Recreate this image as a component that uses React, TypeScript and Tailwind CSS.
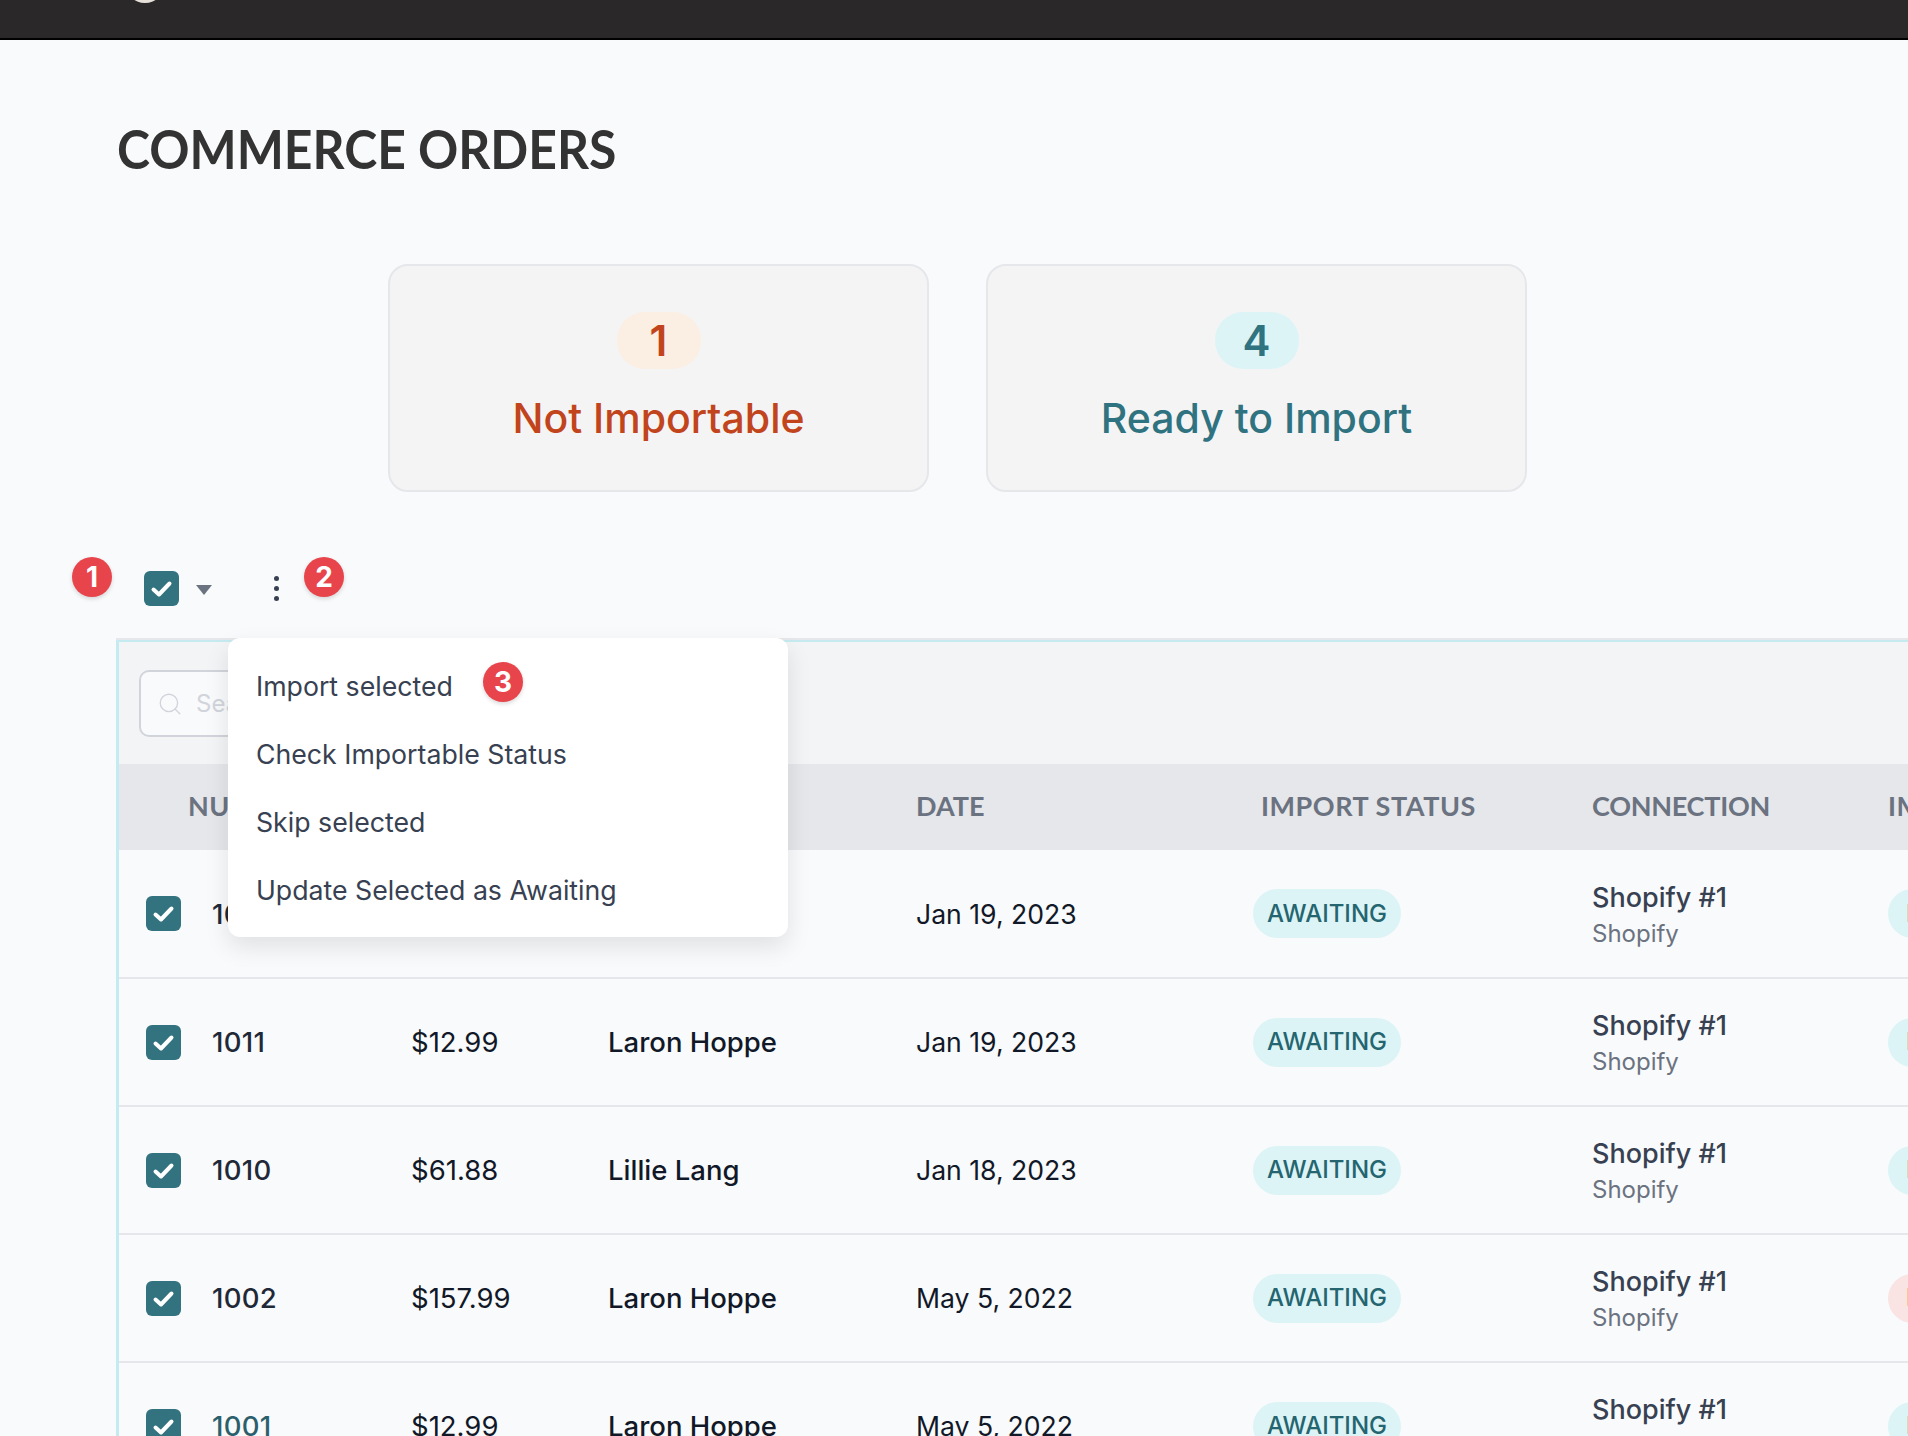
import { Search } from 'lucide-react';

const ORDERS = [
  { num: '1012', price: '$12.99', name: 'Laron Hoppe', date: 'Jan 19, 2023', importable: true },
  { num: '1011', price: '$12.99', name: 'Laron Hoppe', date: 'Jan 19, 2023', importable: true },
  { num: '1010', price: '$61.88', name: 'Lillie Lang', date: 'Jan 18, 2023', importable: true },
  { num: '1002', price: '$157.99', name: 'Laron Hoppe', date: 'May 5, 2022', importable: false },
  { num: '1001', price: '$12.99', name: 'Laron Hoppe', date: 'May 5, 2022', importable: true, link: true },
];

const MENU_ITEMS = ['Import selected', 'Check Importable Status', 'Skip selected', 'Update Selected as Awaiting'];

function Checkbox() {
  return (
    <span className="flex h-[35px] w-[35px] items-center justify-center rounded-[6px] bg-[#33727f]">
      <svg viewBox="0 0 35 35" className="h-[35px] w-[35px]" fill="none">
        <path d="M9.5 18.5 L15 23.5 L25.5 12.5" stroke="#fff" strokeWidth="4" strokeLinecap="round" strokeLinejoin="round" />
      </svg>
    </span>
  );
}

function Marker({ n, className }: { n: number; className: string }) {
  return (
    <span className={`absolute flex h-[40px] w-[40px] items-center justify-center rounded-full bg-[#e7454b] text-[28px] font-bold leading-none text-white shadow-[0_2px_4px_rgba(0,0,0,0.15)] ${className}`}>
      {n}
    </span>
  );
}

function StatCard({ count, label, pill, text }: { count: number; label: string; pill: string; text: string }) {
  return (
    <div className="flex h-[228px] w-[541px] flex-col items-center rounded-[20px] border-2 border-[#e5e7eb] bg-[#f4f4f5] pt-[46px]">
      <span className={`flex h-[57px] w-[84px] items-center justify-center rounded-[28px] text-[42px] font-semibold leading-none ${pill} ${text}`}>{count}</span>
      <span className={`mt-[24px] text-[41px] font-medium leading-[50px] ${text}`}>{label}</span>
    </div>
  );
}

export default function App() {
  return (
    <div className="relative h-[1436px] w-[1908px] overflow-hidden bg-[#f9fafc] font-['Inter',sans-serif]">
      <div className="relative h-[40px] border-b-2 border-black bg-[#2a2829]">
        <span className="absolute left-[125px] top-[-37px] h-[40px] w-[40px] rounded-full bg-[#e5e1d8]" />
      </div>

      <h1 className="ml-[117px] mt-[75px] origin-left scale-x-[0.924] font-['Lato',sans-serif] text-[54px] font-bold leading-[68px] text-[#333333]">COMMERCE ORDERS</h1>

      <div className="mt-[81px] flex gap-[57px] pl-[388px]">
        <StatCard count={1} label="Not Importable" pill="bg-[#fbeee2]" text="text-[#c2441c]" />
        <StatCard count={4} label="Ready to Import" pill="bg-[#dcf4f6]" text="text-[#2f7280]" />
      </div>

      <div className="relative mt-[79px] flex h-[69px] items-start pl-[144px]">
        <Checkbox />
        <svg viewBox="0 0 16 10" className="ml-[17px] mt-[14px] h-[10px] w-[16px]">
          <path d="M0 0 H16 L8 10 Z" fill="#6b7280" />
        </svg>
        <span className="ml-[62px] mt-[5px] flex flex-col gap-[5px]">
          <span className="h-[5px] w-[5px] rounded-full bg-[#374151]" />
          <span className="h-[5px] w-[5px] rounded-full bg-[#374151]" />
          <span className="h-[5px] w-[5px] rounded-full bg-[#374151]" />
        </span>
        <Marker n={1} className="left-[72px] top-[-14px]" />
        <Marker n={2} className="left-[304px] top-[-14px]" />
      </div>

      <div className="relative ml-[116px] w-[1900px] border-l-[3px] border-t-2 border-l-[#c5eaf0] border-t-[#c5eaf0] shadow-[0_-2px_0_#e5e7eb]">
        <div className="flex h-[122px] items-start bg-[#f3f4f6] pl-[20px] pt-[28px]">
          <div className="flex h-[67px] w-[300px] items-center gap-[13px] rounded-[10px] border-2 border-[#d1d5db] bg-[#f9fafc] pl-[16px]">
            <Search className="h-[26px] w-[26px] text-[#d1d5db]" strokeWidth={1.25} />
            <span className="text-[24px] text-[#d1d5db]">Search</span>
          </div>
        </div>

        <table className="w-[1900px] table-fixed border-collapse">
          <colgroup>
            <col className="w-[93px]" />
            <col className="w-[199px]" />
            <col className="w-[197px]" />
            <col className="w-[308px]" />
            <col className="w-[337px]" />
            <col className="w-[339px]" />
            <col className="w-[296px]" />
            <col />
          </colgroup>
          <thead>
            <tr className="h-[86px] bg-[#e5e7eb] text-left font-['Lato',sans-serif] text-[27px] font-bold tracking-[0.02em] text-[#6b7280]">
              <th />
              <th className="pb-[2px] font-bold"><span className="-ml-[24px]">NUMBER</span></th>
              <th className="pb-[2px] font-bold">TOTAL</th>
              <th className="pb-[2px] font-bold">CUSTOMER</th>
              <th className="pb-[2px] font-bold tracking-normal">DATE</th>
              <th className="pb-[2px] pl-[8px] font-bold">IMPORT STATUS</th>
              <th className="pb-[2px] font-bold tracking-[-0.01em]">CONNECTION</th>
              <th className="pb-[2px] font-bold">IMPORTABLE</th>
            </tr>
          </thead>
          <tbody>
            {ORDERS.map((o) => (
              <tr key={o.num} className="h-[128px] border-b-2 border-[#e5e7eb] text-[27px] text-[#111827]">
                <td className="pl-[27px]"><Checkbox /></td>
                <td className={`pt-[2px] text-[27.5px] font-medium tracking-[0.01em] ${o.link ? 'text-[#2b5f6b]' : 'text-[#1f2937]'}`}>{o.num}</td>
                <td className="pt-[2px] text-[27.5px]">{o.price}</td>
                <td className="pt-[2px] text-[27.5px] font-medium">{o.name}</td>
                <td className="pt-[2px] text-[26.6px]">{o.date}</td>
                <td>
                  <span className="inline-flex h-[49px] w-[148px] items-center justify-center rounded-[25px] bg-[#dcf4f6] text-[24px] font-medium text-[#256570]">AWAITING</span>
                </td>
                <td className="pt-[4px]">
                  <div className="font-medium leading-[36px] text-[#374151]">Shopify #1</div>
                  <div className="text-[24px] leading-[36px] text-[#6b7280]">Shopify</div>
                </td>
                <td>
                  {o.importable ? (
                    <span className="inline-flex h-[49px] w-[190px] items-center rounded-[25px] bg-[#dcf4f6] pl-[18px] text-[24px] font-medium text-[#256570]">IMPORTABLE</span>
                  ) : (
                    <span className="inline-flex h-[49px] w-[190px] items-center rounded-[25px] bg-[#fae3e3] pl-[18px] text-[24px] font-medium text-[#b03a2e]">NOT</span>
                  )}
                </td>
              </tr>
            ))}
          </tbody>
        </table>

        <div className="absolute left-[109px] top-[-4px] h-[299px] w-[560px] rounded-[12px] bg-white px-[28px] pt-[14px] shadow-[0_10px_25px_rgba(0,0,0,0.1)]">
          {MENU_ITEMS.map((item) => (
            <div key={item} className="flex h-[68px] items-center text-[26.7px] text-[#374151]">{item}</div>
          ))}
          <Marker n={3} className="left-[255px] top-[24px]" />
        </div>
      </div>
    </div>
  );
}
